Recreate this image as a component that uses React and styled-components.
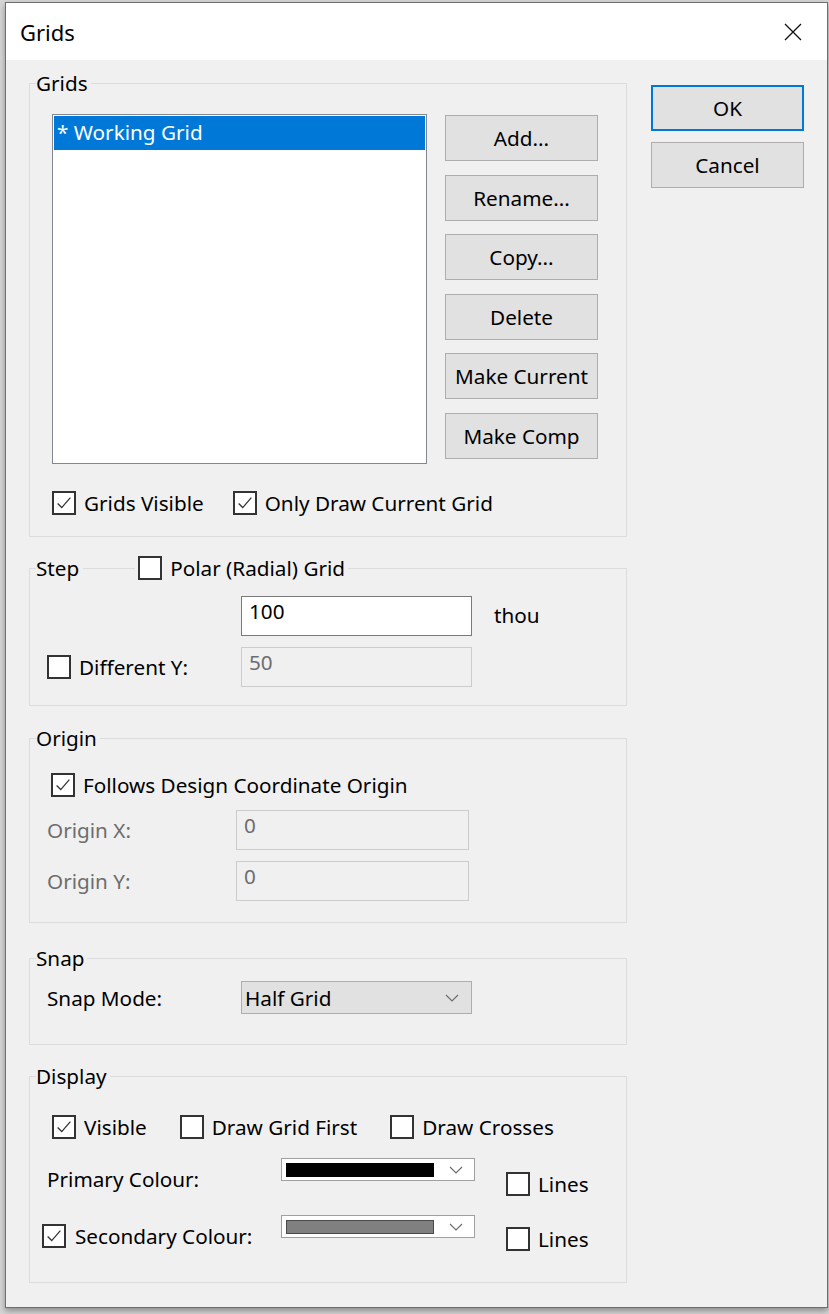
import styled, { createGlobalStyle } from "styled-components";

const GlobalStyle = createGlobalStyle`
  html, body {
    margin: 0;
    padding: 0;
    background: #d6d6d6;
  }
  body {
    font-family: "Noto Sans", "Open Sans", "Liberation Sans", sans-serif;
    font-size: 20.7px;
    color: #000;
  }
`;

const Check = ({ checked }) => (
  <CheckBox>
    {checked && (
      <svg width="22" height="22" viewBox="0 0 22 22">
        <path d="M4 11.5 L8.5 16 L18 5" fill="none" stroke="#333" strokeWidth="1.4" />
      </svg>
    )}
  </CheckBox>
);

const Checkbox = ({ checked, label, gap }) => (
  <CheckLabel $gap={gap}>
    <Check checked={checked} />
    {label && <span>{label}</span>}
  </CheckLabel>
);

const Chevron = () => (
  <svg width="14" height="8" viewBox="0 0 14 8">
    <path d="M1 1 L7 7 L13 1" fill="none" stroke="#6a6a6a" strokeWidth="1.1" />
  </svg>
);

const App = () => {
  const gridButtons = ["Add...", "Rename...", "Copy...", "Delete", "Make Current", "Make Comp"];

  return (
    <>
      <GlobalStyle />
      <Page>
        <Dialog>
          <TitleBar>
            <Title>Grids</Title>
            <svg width="18" height="18" viewBox="0 0 18 18">
              <path d="M1 1 L17 17 M17 1 L1 17" stroke="#111" strokeWidth="1.3" />
            </svg>
          </TitleBar>

          <Body>
            <LeftCol>
              {/* grids list */}
              <Group>
                <Legend>Grids</Legend>
                <GridsContent>
                  <ListRow>
                    <ListBox>
                      <ListItem $selected>* Working Grid</ListItem>
                    </ListBox>
                    <ButtonCol>
                      {gridButtons.map((b) => (
                        <Button key={b}>{b}</Button>
                      ))}
                    </ButtonCol>
                  </ListRow>
                  <CheckRow $gap={29}>
                    <Checkbox checked label="Grids Visible" />
                    <Checkbox checked label="Only Draw Current Grid" />
                  </CheckRow>
                </GridsContent>
              </Group>

              {/* step */}
              <Group $mt={18}>
                <Legend>
                  Step
                  <LegendLine />
                  <Checkbox label="Polar (Radial) Grid" />
                </Legend>
                <FormGrid $pad="15px 0 18px 17px" $col={194} $rowGap={11}>
                  <span />
                  <InputRow>
                    <TextInput>100</TextInput>
                    <Unit>thou</Unit>
                  </InputRow>
                  <Checkbox label="Different Y:" />
                  <TextInput $disabled>50</TextInput>
                </FormGrid>
              </Group>

              {/* origin */}
              <Group $mt={19}>
                <Legend>Origin</Legend>
                <FormGrid $pad="21px 0 21px 17px" $col={189} $rowGap={11}>
                  <FullRow>
                    <Checkbox checked label="Follows Design Coordinate Origin" />
                  </FullRow>
                  <FieldLabel $disabled>Origin X:</FieldLabel>
                  <TextInput $disabled $width={233}>0</TextInput>
                  <FieldLabel $disabled>Origin Y:</FieldLabel>
                  <TextInput $disabled $width={233}>0</TextInput>
                </FormGrid>
              </Group>

              {/* snap */}
              <Group $mt={22}>
                <Legend>Snap</Legend>
                <FormGrid $pad="10px 0 30px 17px" $col={194} $rowGap={0}>
                  <FieldLabel>Snap Mode:</FieldLabel>
                  <Combo>
                    <span>Half Grid</span>
                    <Chevron />
                  </Combo>
                </FormGrid>
              </Group>

              {/* display */}
              <Group $mt={18}>
                <Legend>Display</Legend>
                <DisplayContent>
                  <CheckRow $gap={33} $indent={10}>
                    <Checkbox checked label="Visible" />
                    <Checkbox label="Draw Grid First" />
                    <Checkbox label="Draw Crosses" />
                  </CheckRow>
                  <ColourRow>
                    <ColourLabel $top={8} $indent={5}>Primary Colour:</ColourLabel>
                    <ColourCombo>
                      <Swatch $color="#000" $edge="#000" />
                      <Chevron />
                    </ColourCombo>
                    <LinesBox $top={13}>
                      <Checkbox label="Lines" />
                    </LinesBox>
                  </ColourRow>
                  <ColourRow>
                    <ColourLabel $top={8}>
                      <Checkbox checked label="Secondary Colour:" gap={9} />
                    </ColourLabel>
                    <ColourCombo>
                      <Swatch $color="#808080" $edge="#4a4a4a" />
                      <Chevron />
                    </ColourCombo>
                    <LinesBox $top={11}>
                      <Checkbox label="Lines" />
                    </LinesBox>
                  </ColourRow>
                </DisplayContent>
              </Group>
            </LeftCol>

            <RightCol>
              <Button $default>OK</Button>
              <Button>Cancel</Button>
            </RightCol>
          </Body>
        </Dialog>
      </Page>
    </>
  );
};

export default App;

const Page = styled.div`
  padding: 2px 0 0 5px;
  height: 1314px;
  box-sizing: border-box;
`;

const Dialog = styled.div`
  width: 823px;
  height: 1306px;
  box-sizing: border-box;
  border: 1px solid #6e6e6e;
  background: #f0f0f0;
  display: flex;
  flex-direction: column;
  box-shadow: 0 3px 6px rgba(0, 0, 0, 0.35);
`;

const TitleBar = styled.div`
  height: 57px;
  flex: none;
  background: #fff;
  display: flex;
  align-items: center;
  justify-content: space-between;
  padding: 0 25px 0 14px;
`;

const Title = styled.span`
  font-size: 22px;
  line-height: 28px;
`;

const Body = styled.div`
  display: flex;
  gap: 24px;
  padding: 10px 0 0 23px;
`;

const LeftCol = styled.div`
  width: 598px;
  display: flex;
  flex-direction: column;
`;

const RightCol = styled.div`
  padding-top: 15px;
  display: flex;
  flex-direction: column;
  gap: 11px;
`;

const Group = styled.fieldset`
  margin: ${(p) => p.$mt || 0}px 0 0 0;
  padding: 0;
  min-width: 0;
  border: 1px solid #dcdcdc;
`;

const Legend = styled.legend`
  margin-left: 6px;
  padding: 0 3px 0 0;
  height: 26px;
  line-height: 26px;
  display: flex;
  align-items: center;
`;

const LegendLine = styled.span`
  width: 52px;
  height: 1px;
  margin: 0 3px 0 4px;
  background: #dcdcdc;
`;

const GridsContent = styled.div`
  padding: 18px 0 20px 22px;
  display: flex;
  flex-direction: column;
  gap: 26px;
`;

const ListRow = styled.div`
  display: flex;
  gap: 18px;
`;

const ListBox = styled.div`
  width: 375px;
  height: 350px;
  box-sizing: border-box;
  border: 1px solid #828790;
  background: #fff;
  padding: 1px;
`;

const ListItem = styled.div`
  height: 34px;
  line-height: 32px;
  padding-left: 3px;
  background: ${(p) => (p.$selected ? "#0078d7" : "transparent")};
  color: ${(p) => (p.$selected ? "#fff" : "#000")};
`;

const ButtonCol = styled.div`
  display: flex;
  flex-direction: column;
  gap: 13.6px;
  padding-top: 1px;
`;

const Button = styled.button`
  width: 153px;
  height: 46px;
  box-sizing: border-box;
  background: #e1e1e1;
  border: 1px solid ${(p) => (p.$default ? "#0078d7" : "#adadad")};
  box-shadow: ${(p) => (p.$default ? "inset 0 0 0 1px #0078d7" : "none")};
  font-family: inherit;
  font-size: 20.7px;
  color: #000;
  padding: 0;
`;

const CheckRow = styled.div`
  display: flex;
  align-items: center;
  gap: ${(p) => p.$gap}px;
  margin-left: ${(p) => p.$indent || 0}px;
  height: 26px;
`;

const CheckLabel = styled.label`
  display: flex;
  width: max-content;
  align-items: center;
  gap: ${(p) => p.$gap || 8}px;
  white-space: nowrap;
  height: 26px;
  line-height: 26px;
`;

const CheckBox = styled.span`
  width: 24px;
  height: 24px;
  box-sizing: border-box;
  border: 2px solid #333;
  background: #fff;
  display: flex;
  align-items: center;
  justify-content: center;
  flex: none;
`;

const FormGrid = styled.div`
  display: grid;
  grid-template-columns: ${(p) => p.$col}px auto;
  row-gap: ${(p) => p.$rowGap}px;
  align-items: center;
  justify-items: start;
  padding: ${(p) => p.$pad};
`;

const FullRow = styled.div`
  grid-column: 1 / -1;
  margin-left: 4px;
  margin-bottom: 1px;
`;

const InputRow = styled.div`
  display: flex;
  align-items: center;
  gap: 22px;
`;

const TextInput = styled.div`
  width: ${(p) => p.$width || 231}px;
  height: 40px;
  box-sizing: border-box;
  border: 1px solid ${(p) => (p.$disabled ? "#cccccc" : "#7a7a7a")};
  background: ${(p) => (p.$disabled ? "#f0f0f0" : "#fff")};
  color: ${(p) => (p.$disabled ? "#6d6d6d" : "#000")};
  padding: 1px 0 0 7px;
  line-height: 26px;
`;

const Unit = styled.span`
  line-height: 26px;
  margin-top: -3px;
`;

const FieldLabel = styled.span`
  color: ${(p) => (p.$disabled ? "#6d6d6d" : "#000")};
  line-height: 26px;
`;

const Combo = styled.div`
  width: 231px;
  height: 33px;
  box-sizing: border-box;
  background: #e1e1e1;
  border: 1px solid #adadad;
  display: flex;
  align-items: center;
  justify-content: space-between;
  padding: 0 12px 0 3px;
  line-height: 26px;
`;

const DisplayContent = styled.div`
  padding: 25px 0 30px 12px;
  display: flex;
  flex-direction: column;
  gap: 18px;
`;

const ColourRow = styled.div`
  display: flex;
  align-items: flex-start;
`;

const ColourLabel = styled.div`
  width: ${(p) => 239 - (p.$indent || 0)}px;
  margin-top: ${(p) => p.$top}px;
  padding-left: ${(p) => p.$indent || 0}px;
  line-height: 26px;
`;

const ColourCombo = styled.div`
  width: 194px;
  height: 23px;
  box-sizing: border-box;
  background: #fff;
  border: 1px solid #a0a0a0;
  display: flex;
  align-items: center;
  justify-content: space-between;
  padding: 0 11px 0 4px;
`;

const Swatch = styled.span`
  width: 148px;
  height: 14px;
  box-sizing: border-box;
  background: ${(p) => p.$color};
  border: 1px solid ${(p) => p.$edge};
`;

const LinesBox = styled.div`
  margin: ${(p) => p.$top}px 0 0 31px;
`;
